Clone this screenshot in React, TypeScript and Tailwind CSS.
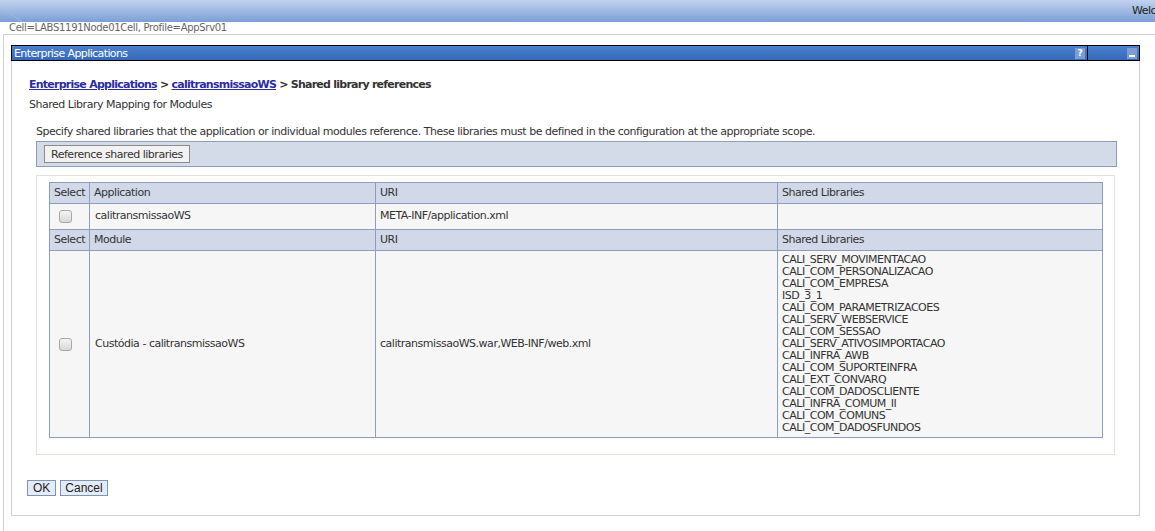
import React from "react"

const libs = [
  "CALI_SERV_MOVIMENTACAO",
  "CALI_COM_PERSONALIZACAO",
  "CALI_COM_EMPRESA",
  "ISD_3_1",
  "CALI_COM_PARAMETRIZACOES",
  "CALI_SERV_WEBSERVICE",
  "CALI_COM_SESSAO",
  "CALI_SERV_ATIVOSIMPORTACAO",
  "CALI_INFRA_AWB",
  "CALI_COM_SUPORTEINFRA",
  "CALI_EXT_CONVARQ",
  "CALI_COM_DADOSCLIENTE",
  "CALI_INFRA_COMUM_II",
  "CALI_COM_COMUNS",
  "CALI_COM_DADOSFUNDOS",
]

const Checkbox = () => (
  <div className="w-[13px] h-[13px] rounded-[3px] border border-[#a9a9a9] bg-gradient-to-b from-[#f4f4f4] to-[#d8d8d8]" />
)

const HeadRow = ({ second }: { second: string }) => (
  <tr className="bg-[#d1d9e8] h-[21px]">
    <td className="border border-[#8c9dbf] px-[4px]">Select</td>
    <td className="border border-[#8c9dbf] px-[4px]">{second}</td>
    <td className="border border-[#8c9dbf] px-[4px]">URI</td>
    <td className="border border-[#8c9dbf] px-[4px]">Shared Libraries</td>
  </tr>
)

export default function App() {
  return (
    <div className="w-[1155px] h-[531px] bg-white overflow-hidden relative text-[#333] font-['DejaVu_Sans',sans-serif] text-[11px] tracking-[-0.48px]">
      {/* banner */}
      <div className="relative h-[22px] bg-gradient-to-b from-[#c3d3ee] to-[#7a9fd6] overflow-hidden">
        <svg className="absolute left-0 top-0" width="60" height="22" viewBox="0 0 60 22">
          <path d="M0 9 Q 12 14 22 22" stroke="#9fb7e0" strokeWidth="1" fill="none" />
        </svg>
        <div className="absolute left-[1132px] top-[3px] whitespace-nowrap text-[#222] text-[11px]">Welc</div>
      </div>
      <div className="h-[12px] pl-[9px] leading-[12px] text-[10px] text-[#666] whitespace-nowrap tracking-[-0.3px]">
        Cell=LABS1191Node01Cell, Profile=AppSrv01
      </div>
      <div className="ml-[3px] border-t border-l border-[#d0d0d0] h-[497px] pt-[10px] pl-[7px]">
        {/* portlet */}
        <div className="w-[1129px] border-l border-r border-b border-[#cfcfcf] h-[471px]">
          <div className="h-[16px] bg-gradient-to-b from-[#4a80cc] to-[#3669bb] border border-black flex items-center text-white text-[11px] leading-none -ml-[1px] -mr-[1px]">
            <div className="flex-1 pl-[2px] tracking-[-0.6px]">Enterprise Applications</div>
            <div className="flex items-center h-full border-r border-black pr-[2px]">
              <div className="w-[10px] h-[11px] bg-[#7a9ed4] text-white font-bold text-[9px] flex items-center justify-center tracking-normal">?</div>
            </div>
            <div className="w-[51px] flex items-center justify-end h-full pr-[2px]">
              <div className="w-[10px] h-[11px] bg-[#7a9ed4] flex items-end justify-center pb-[2px]">
                <div className="w-[6px] h-[2px] bg-white" />
              </div>
            </div>
          </div>
          <div className="pl-[17px] pt-[17px]">
            <div className="font-bold leading-[14px] whitespace-nowrap tracking-[-0.75px]">
              <span className="text-[#2b2ba3] underline">Enterprise Applications</span>
              <span> &gt; </span>
              <span className="text-[#2b2ba3] underline">calitransmissaoWS</span>
              <span> &gt; Shared library references</span>
            </div>
            <div className="mt-[6px] leading-[14px]">Shared Library Mapping for Modules</div>
            <div className="pl-[7px] mt-[13px] leading-[14px] whitespace-nowrap">
              Specify shared libraries that the application or individual modules reference. These libraries must be defined in the configuration at the appropriate scope.
            </div>
            <div className="ml-[7px] mt-[2px] w-[1081px] h-[26px] bg-[#d3dae8] border border-[#8e9dbd] flex items-center pl-[7px]">
              <div className="h-[18px] px-[6px] border border-[#8b8b8b] bg-[#f2f2f2] flex items-center leading-none">
                Reference shared libraries
              </div>
            </div>
            <div className="ml-[7px] mt-[8px] w-[1079px] h-[280px] border border-[#e5e1da] pl-[12px] pt-[6px]">
              <table className="border-collapse w-[1053px] table-fixed">
                <colgroup>
                  <col className="w-[40px]" />
                  <col className="w-[286px]" />
                  <col className="w-[402px]" />
                  <col className="w-[325px]" />
                </colgroup>
                <tbody>
                  <HeadRow second="Application" />
                  <tr className="bg-[#f6f6f6] h-[26px]">
                    <td className="border border-[#8c9dbf] pl-[9px]">
                      <Checkbox />
                    </td>
                    <td className="border border-[#8c9dbf] px-[5px]">calitransmissaoWS</td>
                    <td className="border border-[#8c9dbf] px-[4px]">META-INF/application.xml</td>
                    <td className="border border-[#8c9dbf] px-[4px]"></td>
                  </tr>
                  <HeadRow second="Module" />
                  <tr className="bg-[#f6f6f6] h-[187px]">
                    <td className="border border-[#8c9dbf] pl-[9px]">
                      <Checkbox />
                    </td>
                    <td className="border border-[#8c9dbf] px-[5px]">Custódia - calitransmissaoWS</td>
                    <td className="border border-[#8c9dbf] px-[4px]">calitransmissaoWS.war,WEB-INF/web.xml</td>
                    <td className="border border-[#8c9dbf] px-[4px] leading-[12px]">
                      {libs.map((l) => (
                        <div key={l}>{l}</div>
                      ))}
                    </td>
                  </tr>
                </tbody>
              </table>
            </div>
          </div>
          <div className="pl-[15px] mt-[25px] flex gap-[4px] font-['Liberation_Sans',sans-serif] text-[12px] tracking-normal text-[#222]">
            <div className="h-[16px] px-[5px] border border-[#7f93b5] bg-[#e4ecf7] flex items-center leading-none">OK</div>
            <div className="h-[16px] px-[4px] border border-[#7f93b5] bg-[#e4ecf7] flex items-center leading-none">Cancel</div>
          </div>
        </div>
      </div>
    </div>
  )
}
